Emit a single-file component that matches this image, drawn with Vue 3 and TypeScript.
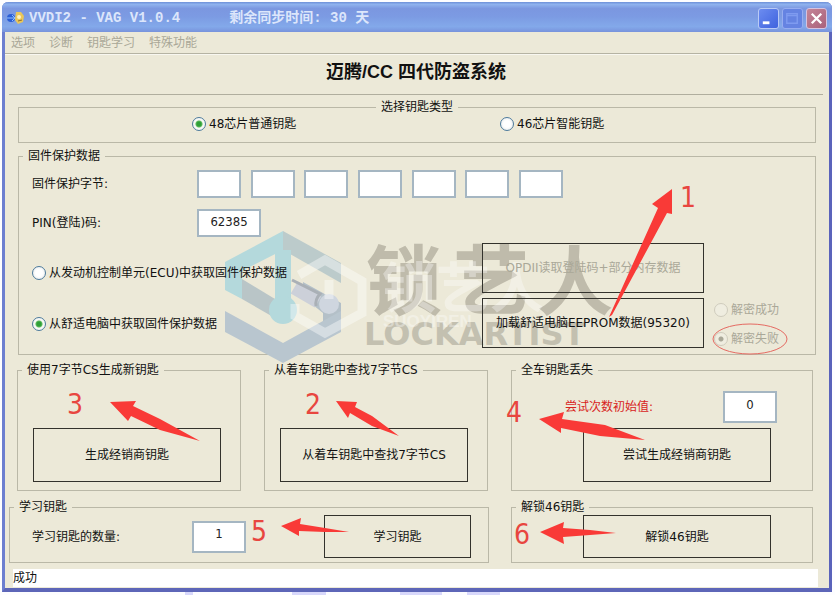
<script setup lang="ts">
import { ref } from 'vue'

const menus = ['选项', '诊断', '钥匙学习', '特殊功能']
const keyType = ref('48')
const source = ref('comfort')
const result = ref('fail')
const bytes = ref<string[]>(['', '', '', '', '', '', ''])
const pin = ref('62385')
const attempts = ref('0')
const keyCount = ref('1')

interface Marker {
  label: string
  x: number
  y: number
  arrow: string
}

const markers: Marker[] = [
  { label: '1', x: 680, y: 207, arrow: '672,189 652,204 658,208 609,317 612,315 667,213 672,214' },
  { label: '2', x: 305, y: 414, arrow: '336,401 357,402 355,407 372,416 399,436 372,426 350,413 348,418' },
  { label: '3', x: 67, y: 414, arrow: '110,402 136,401 133,406 160,419 200,441 160,430 131,416 128,421' },
  { label: '4', x: 506, y: 422, arrow: '539,419 564,412 562,419 605,425 645,440 600,436 561,428 561,433' },
  { label: '5', x: 251, y: 541, arrow: '281,526 301,518 300,524 325,528 349,532 325,532 299,531 299,536' },
  { label: '6', x: 514, y: 544, arrow: '540,532 564,522 563,528 590,530 616,533 590,535 563,537 564,544' },
]
</script>

<template>
  <div class="page">
    <main class="window">
      <header class="titlebar">
        <svg class="app-icon" viewBox="0 0 18 14" aria-hidden="true">
          <circle cx="4" cy="7" r="4" fill="#2c5fd6" />
          <path d="M0 7h7M5 4l3 3-3 3" stroke="#8fc0ff" stroke-width="1" fill="none" />
          <path d="M9 1h5l3 4-1 6-5 2-3-4z" fill="#e9c65a" />
          <circle cx="12" cy="6" r="2" fill="#fff3c0" />
          <path d="M11 10l4-1" stroke="#94702a" stroke-width="1" />
        </svg>
        <h1 class="title">VVDI2 - VAG V1.0.4</h1>
        <span class="title sync">剩余同步时间: 30 天</span>
        <div class="controls">
          <button class="ctl" type="button" aria-label="最小化">
            <svg viewBox="0 0 20 20"><rect x="4" y="13" width="7" height="3" fill="#fff" /></svg>
          </button>
          <button class="ctl max" type="button" aria-label="最大化" disabled>
            <svg viewBox="0 0 20 20"><path d="M4 5h11v10H4zM4 7h11" fill="none" stroke="#7f9bf0" stroke-width="1.5" /></svg>
          </button>
          <button class="ctl close" type="button" aria-label="关闭">
            <svg viewBox="0 0 20 20"><path d="M5 5l10 10M15 5L5 15" stroke="#fff" stroke-width="2.4" /></svg>
          </button>
        </div>
      </header>

      <nav class="menu">
        <button v-for="m in menus" :key="m" type="button" disabled>{{ m }}</button>
      </nav>

      <div class="body">
        <h2 class="heading">迈腾/CC 四代防盗系统</h2>

        <fieldset class="group types">
          <legend class="centered">选择钥匙类型</legend>
          <label class="radio"><input v-model="keyType" type="radio" name="type" value="48" />48芯片普通钥匙</label>
          <label class="radio"><input v-model="keyType" type="radio" name="type" value="46" />46芯片智能钥匙</label>
        </fieldset>

        <fieldset class="group firmware">
          <legend>固件保护数据</legend>
          <div class="field">
            <label for="byte0">固件保护字节:</label>
            <div class="bytes">
              <input
                v-for="(_, i) in bytes"
                :id="`byte${i}`"
                :key="i"
                v-model="bytes[i]"
                class="box byte"
                type="text"
                :aria-label="`字节 ${i + 1}`"
              />
            </div>
          </div>
          <div class="field">
            <label for="pin">PIN(登陆)码:</label>
            <input id="pin" v-model="pin" class="box pin" type="text" />
          </div>
          <div class="sources">
            <div class="choices">
              <label class="radio"><input v-model="source" type="radio" name="source" value="ecu" />从发动机控制单元(ECU)中获取固件保护数据</label>
              <label class="radio"><input v-model="source" type="radio" name="source" value="comfort" />从舒适电脑中获取固件保护数据</label>
            </div>
            <div class="actions">
              <button class="action" type="button" disabled>OPDII读取登陆码+部分内存数据</button>
              <button class="action" type="button">加载舒适电脑EEPROM数据(95320)</button>
            </div>
            <div class="results">
              <label class="radio off"><input v-model="result" type="radio" name="result" value="ok" disabled />解密成功</label>
              <label class="radio off"><input v-model="result" type="radio" name="result" value="fail" disabled />解密失败</label>
            </div>
          </div>
        </fieldset>

        <div class="row three">
          <fieldset class="group stack">
            <legend>使用7字节CS生成新钥匙</legend>
            <button class="action" type="button">生成经销商钥匙</button>
          </fieldset>
          <fieldset class="group stack">
            <legend>从着车钥匙中查找7字节CS</legend>
            <button class="action" type="button">从着车钥匙中查找7字节CS</button>
          </fieldset>
          <fieldset class="group lost">
            <legend>全车钥匙丢失</legend>
            <div class="attempts">
              <label for="attempts">尝试次数初始值:</label>
              <input id="attempts" v-model="attempts" class="box count" type="text" />
            </div>
            <button class="action" type="button">尝试生成经销商钥匙</button>
          </fieldset>
        </div>

        <div class="row two">
          <fieldset class="group learn">
            <legend>学习钥匙</legend>
            <label for="count">学习钥匙的数量:</label>
            <input id="count" v-model="keyCount" class="box count" type="text" />
            <button class="action" type="button">学习钥匙</button>
          </fieldset>
          <fieldset class="group unlock">
            <legend>解锁46钥匙</legend>
            <button class="action" type="button">解锁46钥匙</button>
          </fieldset>
        </div>

        <p class="status">成功</p>
      </div>
    </main>

    <svg class="layer" width="835" height="595" viewBox="0 0 835 595" aria-hidden="true">
      <polygon points="283,231 341,263 341,283 283,250" fill="#bccbcb" />
      <polygon points="283,231 225,262 225,290 242,299 242,271 283,250" fill="#b4d9dc" />
      <polygon points="242,279 275,299 275,318 242,299" fill="#b9c5c7" />
      <polygon points="225,311 283,343 323,321 323,313 341,303 341,332 283,363 225,332" fill="#b9c6cf" />
      <polygon points="303,282 341,303 341,311 323,321 323,313 303,297" fill="#b4c0c8" />
      <path d="M283 250V300" stroke="#b4d9dc" stroke-width="16" />
      <circle cx="283" cy="310" r="14" fill="#b4d9dc" />
      <path d="M294 288L318 302" fill="none" stroke="#ccd0d9" stroke-width="13" />
      <path d="M292 280L320 294q-5 5 -4 12" fill="none" stroke="#aab0b6" stroke-width="3" />
      <circle cx="329" cy="304" r="10" fill="#cfd6df" />
      <path
        d="M299 275L325 260L362 281V313L325 333L295 316V304"
        fill="none"
        stroke="#fff"
        stroke-width="9"
        opacity="0.4"
      />
      <path d="M329 280V299" fill="none" stroke="#fff" stroke-width="9" opacity="0.4" />
      <g class="brand">
        <text x="404" y="309">锁</text>
        <text x="491" y="309">艺</text>
        <text x="575" y="309">人</text>
      </g>
      <text class="latin" x="364" y="345">LOCKARTIST</text>
      <text class="ghost" x="382" y="308">锁艺人</text>
      <text class="ghost small" x="383" y="327">SUOYIREN</text>
    </svg>

    <svg class="layer notes" width="835" height="595" viewBox="0 0 835 595" aria-hidden="true">
      <g v-for="m in markers" :key="m.label">
        <polygon :points="m.arrow" />
        <text :x="m.x" :y="m.y">{{ m.label }}</text>
      </g>
      <ellipse cx="750" cy="339" rx="37" ry="15" />
    </svg>
    <div class="strip"></div>
  </div>
</template>

<style>
body {
  margin: 0;
  background: #fdfdff;
}
</style>

<style scoped>
.page {
  position: relative;
  padding: 2px 3px 0 2px;
  font: 12px/16px "DejaVu Sans", "Noto Sans CJK SC", sans-serif;
  color: #111;
}
.window {
  border: solid #6d7fd0;
  border-width: 0 3px 4px;
  border-right-color: #5a63bb;
  border-bottom-color: #5d66b8;
  border-radius: 6px 6px 0 0;
  background: #ece9d8;
}
.titlebar {
  display: flex;
  align-items: center;
  height: 30px;
  margin: 0 -3px;
  padding: 2px 5px 0;
  box-sizing: border-box;
  border-radius: 6px 6px 0 0;
  background: linear-gradient(#6d8fd8, #8fb2ee 8%, #7b97e0 22%, #7c9be3 50%, #83a9ea 82%, #7893dc);
}
.app-icon {
  width: 18px;
  height: 14px;
  margin-right: 4px;
}
.title {
  margin: 0;
  font: bold 14px/20px "Liberation Mono", "Noto Sans CJK SC", monospace;
  color: #dce6fb;
  white-space: pre;
}
.sync {
  margin-left: 49px;
}
.controls {
  display: flex;
  gap: 3px;
  margin-left: auto;
}
.ctl {
  width: 21px;
  height: 21px;
  padding: 0;
  border: 1px solid #b9caf6;
  border-radius: 3px;
  background: linear-gradient(135deg, #6c8cf0, #3f63de);
}
.ctl svg {
  display: block;
}
.ctl.max {
  border-color: #97adf0;
  background: #6583e2;
}
.ctl.close {
  border-color: #d5c3e0;
  background: linear-gradient(135deg, #c58597, #a9627c);
}
.menu {
  display: flex;
  gap: 14px;
  height: 21px;
  padding: 0 6px;
  border-bottom: 1px solid #b5b3a3;
}
.menu button {
  padding: 0;
  border: 0;
  background: none;
  font: inherit;
  color: #a9a797;
}
.body {
  position: relative;
  padding: 0 6px 1px 4px;
  box-shadow: inset 0 1px #f8f7f0;
}
.heading {
  margin: 0 0 4px;
  padding: 4px 0 8px;
  border-bottom: 1px solid #b0ae9e;
  font: bold 18px/28px "Liberation Sans", "Noto Sans CJK SC", sans-serif;
  text-align: center;
}
.group {
  min-width: 0;
  margin: 0;
  padding: 0;
  border: 1px solid #bab8a7;
  box-sizing: border-box;
}
legend {
  margin-left: 4px;
  padding: 0 5px;
}
legend.centered {
  margin: 0 auto;
}
.types {
  display: grid;
  grid-template-columns: 308fr 488fr;
  margin: 0 7px 5px 9px;
  padding: 1px 0 10px;
}
.types .radio {
  padding-left: 173px;
}
.radio {
  display: flex;
  align-items: center;
  gap: 3px;
  white-space: nowrap;
}
.radio input {
  flex: none;
  width: 14px;
  height: 14px;
  margin: 0;
  appearance: none;
  border: 1px solid #4c7a9c;
  border-radius: 50%;
  background: radial-gradient(#fff 40%, #dfe4e4);
}
.radio input:checked {
  background: radial-gradient(circle, #2f9e38 0 2px, #5cbb5c 3px, #f6f8f4 4px);
}
.radio.off {
  color: #aaa898;
}
.radio.off input {
  border-color: #cfccbd;
  background: #efede0;
}
.radio.off input:checked {
  background: radial-gradient(circle, #a9a797 0 2px, #efede0 3px);
}
.firmware {
  margin: 0 7px 0 9px;
  padding: 6px 10px 6px 13px;
}
.firmware legend {
  margin-left: -9px;
}
.field {
  display: grid;
  grid-template-columns: 165px minmax(0, 1fr);
  align-items: center;
  margin-bottom: 11px;
}
.field + .field {
  margin-bottom: 6px;
}
.bytes {
  display: flex;
  justify-content: space-between;
  width: 366px;
}
.box {
  box-sizing: border-box;
  height: 28px;
  padding: 0 0 4px;
  border: 2px solid #a5b6c2;
  background: #fff;
  font: 13px/16px "DejaVu Sans Condensed", "DejaVu Sans", sans-serif;
  color: #222;
  text-align: center;
}
.byte {
  width: 44px;
}
.pin {
  width: 64px;
}
.count {
  width: 54px;
  height: 32px;
  padding-bottom: 6px;
}
.sources {
  display: flex;
}
.choices,
.results {
  display: flex;
  flex-direction: column;
  justify-content: flex-end;
}
.choices {
  flex: 1;
  gap: 35px;
  padding-bottom: 16px;
}
.actions {
  display: grid;
  gap: 5px;
  width: 222px;
}
.results {
  gap: 13px;
  width: 91px;
  padding: 0 0 1px 10px;
}
.action {
  height: 50px;
  padding: 0;
  border: 1px solid #33322c;
  background: none;
  font: inherit;
  color: #111;
  white-space: nowrap;
}
.action:disabled {
  color: #aaa898;
}
.row {
  display: grid;
}
.three {
  grid-template-columns: minmax(0, 224fr) minmax(0, 224fr) minmax(0, 302fr);
  gap: 23px;
  margin: 7px 10px 8px 8px;
}
.three .action {
  width: 188px;
  height: 54px;
}
.stack {
  display: flex;
  flex-direction: column;
  justify-content: flex-end;
  padding: 0 16px 8px 15px;
}
.stack legend {
  margin-left: -11px;
}
.lost {
  padding: 13px 35px 8px 53px;
}
.lost legend {
  margin-left: -49px;
}
.attempts {
  display: flex;
  align-items: center;
  justify-content: space-between;
  margin-bottom: 5px;
  color: #d8231c;
}
.lost .action {
  display: block;
  margin: 0 6px 0 auto;
}
.two {
  grid-template-columns: minmax(0, 480fr) minmax(0, 302fr);
  gap: 22px;
  margin: 0 10px 6px 0;
}
.two .action {
  height: 43px;
  margin-left: auto;
}
.learn,
.unlock {
  display: flex;
  align-items: center;
  padding: 0 17px 4px 22px;
}
.learn label {
  width: 160px;
}
.learn legend {
  margin-left: -18px;
}
.learn .action {
  width: 147px;
}
.unlock {
  padding-right: 41px;
}
.unlock legend {
  margin-left: -18px;
}
.unlock .action {
  width: 188px;
}
.status {
  margin: 0 5px 0 4px;
  background: #fff;
  line-height: 18px;
}
.group label,
.group legend,
.group button {
  position: relative;
  z-index: 1;
}
.layer {
  position: absolute;
  top: 0;
  left: 0;
  pointer-events: none;
}
.notes {
  z-index: 2;
}
.brand {
  font: bold 76px "Noto Sans CJK SC", sans-serif;
  fill: #bfbbab;
  text-anchor: middle;
}
.latin {
  font: bold 32px "DejaVu Sans", sans-serif;
  fill: #c3c0b0;
}
.ghost {
  font: bold 54px "Noto Sans CJK SC", sans-serif;
  fill: #fff;
  opacity: 0.35;
}
.ghost.small {
  font: bold 17px "Liberation Sans", sans-serif;
}
.notes polygon {
  fill: #f93a37;
}
.notes text {
  font: 28px "DejaVu Sans Condensed", "DejaVu Sans", sans-serif;
  fill: #e8463f;
}
.notes ellipse {
  fill: none;
  stroke: #e56a62;
  stroke-width: 1;
}
.strip {
  height: 3px;
  background: linear-gradient(
    90deg,
    transparent 22%, #d8d8fb 22% 23%, transparent 23% 35%, #d8d8fb 35% 39%,
    transparent 39% 48%, #d8d8fb 48% 53%, transparent 53% 56%, #d8d8fb 56% 60%, transparent 60%
  );
}
</style>
